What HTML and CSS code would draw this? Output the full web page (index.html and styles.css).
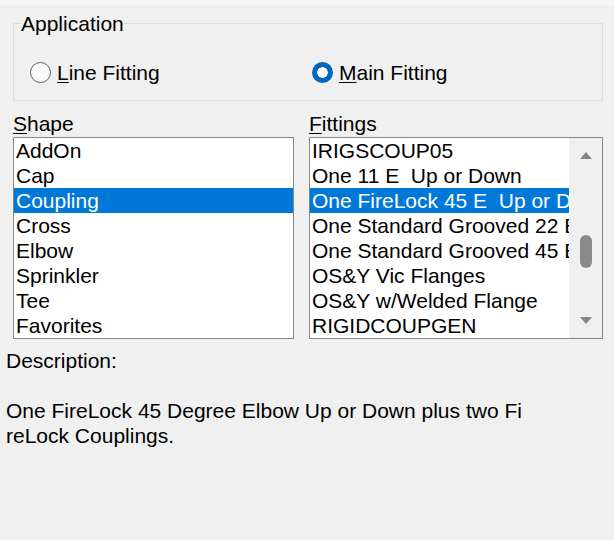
FILE: index.html
```html
<!DOCTYPE html>
<html lang="en">
<head>
    <meta charset="UTF-8">
    <meta name="viewport" content="width=device-width, initial-scale=1.0">
    <title>Select Fitting</title>
    <link rel="stylesheet" href="styles.css">
</head>
<body>
    <div class="top-band"></div>
    <fieldset class="group">
        <legend>Application</legend>
        <div class="radio-row">
            <label class="radio">
                <span class="radio-dot"></span>
                <span><u>L</u>ine Fitting</span>
            </label>
            <label class="radio checked">
                <span class="radio-dot"></span>
                <span><u>M</u>ain Fitting</span>
            </label>
        </div>
    </fieldset>

    <div class="lists">
        <div class="col col-shape">
            <div class="list-label"><u>S</u>hape</div>
            <ul class="listbox">
                <li>AddOn</li>
                <li>Cap</li>
                <li class="selected">Coupling</li>
                <li>Cross</li>
                <li>Elbow</li>
                <li>Sprinkler</li>
                <li>Tee</li>
                <li>Favorites</li>
            </ul>
        </div>
        <div class="col col-fittings">
            <div class="list-label"><u>F</u>ittings</div>
            <div class="listbox with-scroll">
                <ul class="items">
                    <li>IRIGSCOUP05</li>
                    <li>One 11 E&nbsp; Up or Down</li>
                    <li class="selected">One FireLock 45 E&nbsp; Up or Down</li>
                    <li>One Standard Grooved 22 E&nbsp; Up or Down</li>
                    <li>One Standard Grooved 45 E&nbsp; Up or Down</li>
                    <li>OS&amp;Y Vic Flanges</li>
                    <li>OS&amp;Y w/Welded Flange</li>
                    <li>RIGIDCOUPGEN</li>
                </ul>
                <div class="scrollbar">
                    <span class="arrow up"></span>
                    <span class="thumb"></span>
                    <span class="arrow down"></span>
                </div>
            </div>
        </div>
    </div>

    <div class="description">
        <p>Description:</p>
        <p class="desc-text">One FireLock 45 Degree Elbow Up or Down plus two Fi<br>reLock Couplings.</p>
    </div>
</body>
</html>
```

FILE: styles.css
```css
body {
    margin: 0;
    background-color: #f0f0f0;
    font-family: "Liberation Sans", Arial, sans-serif;
    font-size: 21px;
    color: #000;
}

u {
    text-decoration-thickness: 1px;
    text-underline-offset: 2px;
}

.top-band {
    height: 5px;
    background-color: #f5f5f5;
}

.group {
    margin: 7px 11px 0 13px;
    padding: 0 0 15px 7px;
    border: 1px solid #dcdcdc;
}

.group legend {
    padding: 0;
    line-height: 23px;
}

.radio-row {
    display: flex;
    margin-top: 25px;
    margin-left: 9px;
    height: 25px;
    align-items: center;
}

.radio {
    display: flex;
    align-items: center;
    gap: 6px;
    line-height: 25px;
}

.radio:first-child {
    width: 282px;
}

.radio-dot {
    width: 19px;
    height: 19px;
    border: 1px solid #5c5c5c;
    border-radius: 50%;
    background-color: #fbfbfb;
    box-sizing: content-box;
}

.radio.checked .radio-dot {
    width: 21px;
    height: 21px;
    border: none;
    background: radial-gradient(circle, #fff 0, #fff 5px, #0067c0 5.5px);
}

.lists {
    display: flex;
    gap: 15px;
    margin: 11px 11px 0 13px;
}

.col-shape {
    flex: none;
    width: 281px;
}

.col-fittings {
    flex: 1;
    min-width: 0;
}

.list-label {
    line-height: 23px;
    margin-bottom: 2px;
}

.listbox {
    margin: 0;
    padding: 0;
    list-style: none;
    border: 1px solid #868686;
    background-color: #fff;
    height: 200px;
}

.listbox li,
.items li {
    height: 25px;
    line-height: 25px;
    padding-left: 2px;
    white-space: nowrap;
    overflow: hidden;
}

.listbox li.selected,
.items li.selected {
    background-color: #0078d7;
    color: #fff;
}

.with-scroll {
    display: flex;
}

.items {
    flex: 1;
    min-width: 0;
    margin: 0;
    padding: 0;
    list-style: none;
}

.scrollbar {
    flex: none;
    width: 33px;
    background-color: #f0f0f0;
    position: relative;
}

.arrow {
    position: absolute;
    left: 11px;
    width: 0;
    height: 0;
    border-left: 6px solid transparent;
    border-right: 6px solid transparent;
}

.arrow.up {
    top: 14px;
    border-bottom: 7px solid #858585;
}

.arrow.down {
    bottom: 14px;
    border-top: 7px solid #858585;
}

.thumb {
    position: absolute;
    left: 11px;
    top: 97px;
    width: 12px;
    height: 33px;
    border-radius: 6px;
    background-color: #8a8a8a;
}

.description {
    margin: 9px 0 0 6px;
}

.description p {
    margin: 0;
    line-height: 25px;
}

.description .desc-text {
    margin-top: 25px;
}
```
